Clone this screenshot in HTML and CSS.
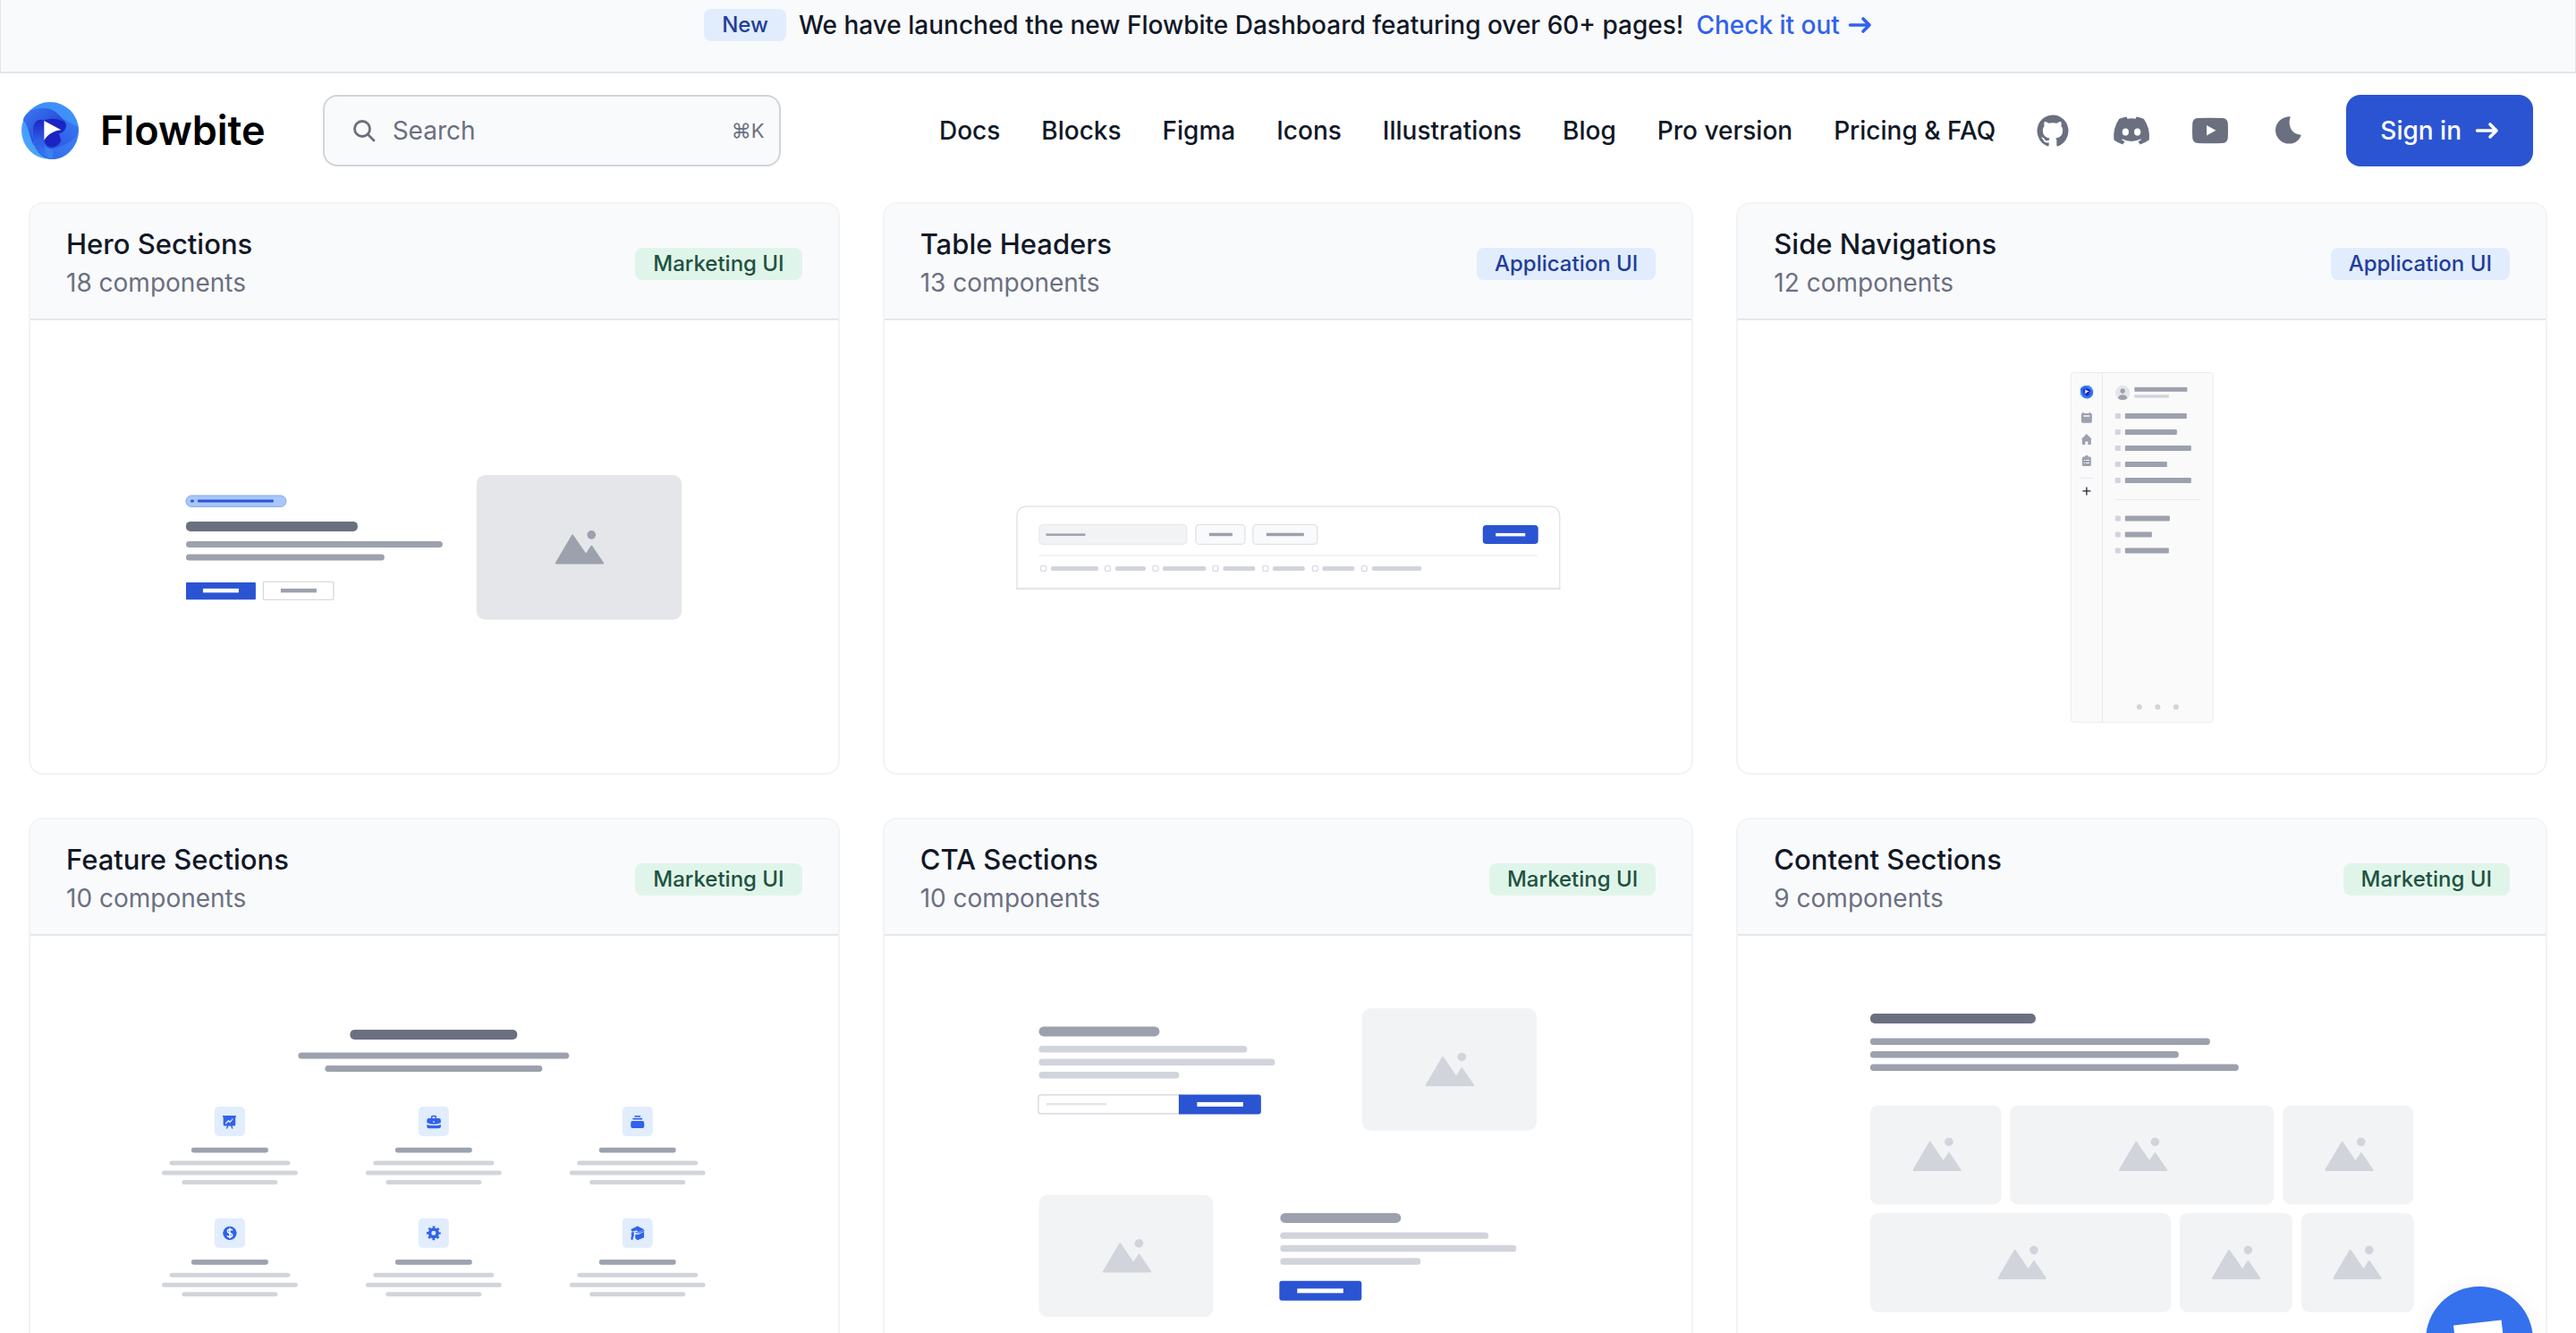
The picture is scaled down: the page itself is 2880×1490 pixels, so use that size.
FILE: index.html
```html
<!DOCTYPE html>
<html lang="en">
<head>
<meta charset="utf-8">
<meta name="viewport" content="width=device-width, initial-scale=1">
<title>Flowbite Blocks</title>
<link rel="stylesheet" href="styles.css">
</head>
<body>
<svg class="defs" aria-hidden="true">
  <defs>
    <linearGradient id="logo-base" x1="0" y1="1" x2="1" y2="0"><stop offset="0" stop-color="#4fb0ff"/><stop offset=".5" stop-color="#3f8ef8"/><stop offset="1" stop-color="#3f93f9"/></linearGradient>
    <linearGradient id="logo-mid" x1="0" y1="0" x2="1" y2="1"><stop offset="0" stop-color="#3a7bf2"/><stop offset=".5" stop-color="#2b55df"/><stop offset="1" stop-color="#1a22c0"/></linearGradient>
    <linearGradient id="logo-right" x1="1" y1="0" x2="0" y2="1"><stop offset="0" stop-color="#3a7df2"/><stop offset=".6" stop-color="#2c58e2"/><stop offset="1" stop-color="#1b25c2"/></linearGradient>
    <linearGradient id="logo-left" x1="0" y1="1" x2="0" y2="0"><stop offset="0" stop-color="#377cf3"/><stop offset=".5" stop-color="#2c5be4"/><stop offset="1" stop-color="#1b22c0"/></linearGradient>
    <symbol id="logo" viewBox="0 0 192 192">
      <circle cx="96" cy="96" r="96" fill="url(#logo-base)"/>
      <path d="M191 84C192 150 150 192 104 192C60 188 39 150 39 116L120 104C150 92 154 74 142 54C160 72 180 76 191 84Z" fill="url(#logo-right)"/>
      <path d="M104 192C58 184 39 150 39 116V86C39 60 60 52 80 58L76 62V128C76 152 96 158 106 157L104 192Z" fill="url(#logo-left)"/>
      <path d="M104 192C150 194 190 150 191 100C180 136 130 150 104 157C92 158 84 152 78 144C76 170 90 188 104 192Z" fill="#3f8ff9" opacity=".5"/>
      <path d="M5 62C14 18 88 8 118 36L144 62C160 82 144 102 122 106L76 62C62 54 42 64 39 86C38 110 38 128 42 146C26 120 22 70 5 62Z" fill="url(#logo-mid)"/>
      <path d="M76 62C96 52 124 56 144 66C154 84 146 100 126 106L133 130C120 158 84 160 76 128Z" fill="#1b24c2"/>
      <path d="M76 63L133 94C110 96 88 108 76 129Z" fill="#fff"/>
    </symbol>
    <symbol id="peaks" viewBox="0 0 55 38">
      <circle cx="40.5" cy="5" r="4.8"/>
      <path d="M1 37.7Q-.4 37.3 .4 35.6L18.4 5Q19.3 3.8 20.2 5L34.3 25.7L39.9 17Q40.6 16 41.3 17L54.2 36Q54.9 37.6 53.4 37.7Z"/>
    </symbol>
    <symbol id="arrow" viewBox="0 0 28 28"><path d="M3.500 14H25M18 7L25 14L18 21" fill="none" stroke="currentColor" stroke-width="3.600" stroke-linecap="round" stroke-linejoin="round"/></symbol>
    <symbol id="feature-text" viewBox="0 0 152 42">
      <rect x="33" y="0" width="86" height="6" rx="3" fill="#9ca3af"/>
      <g fill="#d1d5db"><rect x="8.500" y="15" width="135" height="5" rx="2.500"/><rect y="26" width="152" height="5" rx="2.500"/><rect x="22.500" y="36.500" width="107" height="5" rx="2.500"/></g>
    </symbol>
  </defs>
</svg>

<aside class="banner">
  <span class="badge badge-blue">New</span>
  <span class="banner-text">We have launched the new Flowbite Dashboard featuring over 60+ pages!</span>
  <a class="banner-link" href="#dashboard">Check it out <svg class="arrow"><use href="#arrow"/></svg></a>
</aside>

<header class="header">
  <a class="brand" href="#home"><svg class="brand-logo"><use href="#logo"/></svg><span>Flowbite</span></a>
  <label class="search">
    <svg class="search-icon" viewBox="0 0 28 28" fill="none" stroke="currentColor" stroke-width="2.800" stroke-linecap="round"><circle cx="12" cy="12" r="8.500"/><path d="M18.500 18.500L25 25"/></svg>
    <input class="search-input" type="text" placeholder="Search" aria-label="Search">
    <kbd class="search-key">⌘K</kbd>
  </label>
  <div class="header-end">
    <nav class="nav">
      <a href="#docs">Docs</a><a href="#blocks">Blocks</a><a href="#figma">Figma</a><a href="#icons">Icons</a><a href="#illustrations">Illustrations</a><a href="#blog">Blog</a><a href="#pro">Pro version</a><a href="#pricing">Pricing &amp; FAQ</a>
    </nav>
    <div class="social">
      <a href="#github" aria-label="GitHub"><svg class="icon-small" viewBox="0 0 24 24"><path fill-rule="evenodd" d="M12.006 2a9.847 9.847 0 0 0-6.484 2.440 10.320 10.320 0 0 0-3.393 6.170 10.480 10.480 0 0 0 1.317 6.955 10.045 10.045 0 0 0 5.400 4.418c.504.095.683-.223.683-.494 0-.245-.010-1.052-.014-1.908-2.780.620-3.366-1.210-3.366-1.210a2.711 2.711 0 0 0-1.110-1.500c-.907-.637.070-.621.070-.621.317.044.620.163.885.346.266.183.487.426.647.710.135.253.318.476.538.655a2.079 2.079 0 0 0 2.370.196c.045-.520.270-1.006.635-1.370-2.219-.259-4.554-1.138-4.554-5.070a4.022 4.022 0 0 1 1.031-2.750 3.770 3.770 0 0 1 .096-2.713s.839-.275 2.749 1.050a9.260 9.260 0 0 1 5.004 0c1.906-1.325 2.740-1.050 2.740-1.050.370.858.406 1.828.101 2.713a4.017 4.017 0 0 1 1.029 2.750c0 3.939-2.339 4.805-4.564 5.058a2.471 2.471 0 0 1 .679 1.897c0 1.372-.012 2.477-.012 2.814 0 .272.180.592.687.492a10.050 10.050 0 0 0 5.388-4.421 10.473 10.473 0 0 0 1.313-6.948 10.320 10.320 0 0 0-3.390-6.165A9.847 9.847 0 0 0 12.007 2Z"/></svg></a>
      <a href="#discord" aria-label="Discord"><svg class="icon" viewBox="0 0 24 24"><path d="M18.942 5.556a16.300 16.300 0 0 0-4.126-1.300 12.040 12.040 0 0 0-.529 1.100 15.175 15.175 0 0 0-4.573 0 11.586 11.586 0 0 0-.535-1.100 16.274 16.274 0 0 0-4.129 1.300 17.392 17.392 0 0 0-2.868 11.662 15.785 15.785 0 0 0 4.963 2.521c.410-.564.773-1.160 1.084-1.785a10.638 10.638 0 0 1-1.706-.830c.143-.106.283-.217.418-.331a11.664 11.664 0 0 0 10.118 0c.137.114.277.225.418.331-.544.328-1.116.606-1.710.832a12.580 12.580 0 0 0 1.084 1.785 16.460 16.460 0 0 0 5.064-2.595 17.286 17.286 0 0 0-2.973-11.590ZM8.678 14.813a1.940 1.940 0 0 1-1.800-2.045 1.930 1.930 0 0 1 1.800-2.047 1.918 1.918 0 0 1 1.800 2.047 1.929 1.929 0 0 1-1.800 2.045Zm6.644 0a1.940 1.940 0 0 1-1.800-2.045 1.930 1.930 0 0 1 1.800-2.047 1.919 1.919 0 0 1 1.800 2.047 1.930 1.930 0 0 1-1.800 2.045Z"/></svg></a>
      <a href="#youtube" aria-label="YouTube"><svg class="icon" viewBox="0 0 24 24"><path fill-rule="evenodd" d="M5 5Q12 4.800 19 5Q21.700 5.200 21.900 8Q22.100 12 21.900 16Q21.700 18.800 19 19Q12 19.200 5 19Q2.300 18.800 2.100 16Q1.900 12 2.100 8Q2.300 5.200 5 5ZM10 9V14.700L15.200 11.900Z"/></svg></a>
      <button type="button" aria-label="Toggle dark mode"><svg class="icon" viewBox="-9 -8 48 48"><path d="M15.500 .3Q17 0 16.600 1.200C13.500 9.500 18 20 27.500 20.400Q29 20.600 28.400 21.900C26 27.500 21 30.600 15.300 30.600C7 30.600 0 24 0 15.400C0 7.500 6.500 .8 15.500 .3Z"/></svg></button>
    </div>
    <button class="sign-in" type="button">Sign in <svg class="arrow"><use href="#arrow"/></svg></button>
  </div>
</header>

<main class="cards">
  <article class="card">
    <header class="card-head"><div><h2>Hero Sections</h2><p>18 components</p></div><span class="badge badge-green">Marketing UI</span></header>
    <svg class="preview" viewBox="0 0 903 506">
      <rect x="174" y="196" width="112" height="12.500" rx="6" fill="#a9c6fa" stroke="#84aaf8"/>
      <g fill="#2b54d3"><rect x="179" y="200.700" width="4" height="3" rx="1.500"/><rect x="187" y="200.700" width="85" height="3" rx="1"/></g>
      <rect x="174" y="225" width="192" height="11" rx="5" fill="#6b7080"/>
      <g fill="#9ca1ad"><rect x="174" y="247" width="287" height="7" rx="3.500"/><rect x="174" y="261.500" width="222" height="7" rx="3.500"/></g>
      <rect x="174" y="293" width="78" height="19.500" rx="1" fill="#2b54d3"/><rect x="193" y="300" width="40" height="4.500" fill="#fff"/>
      <rect x="260.500" y="292.500" width="78.500" height="20" rx="1" fill="#fff" stroke="#d8dae1" stroke-width="1.400"/><rect x="280" y="300" width="40" height="4.500" fill="#9ca1ad"/>
      <rect x="499" y="173" width="229.500" height="162" rx="10" fill="#e4e6ea"/>
      <use href="#peaks" x="587" y="235" width="55" height="38" fill="#9ca1ad"/>
    </svg>
  </article>

  <article class="card">
    <header class="card-head"><div><h2>Table Headers</h2><p>13 components</p></div><span class="badge badge-blue">Application UI</span></header>
    <svg class="preview" viewBox="0 0 903 506">
      <path d="M148 300V220Q148 208 160 208H743Q755 208 755 220V300Z" fill="#fff" stroke="#e5e6ea" stroke-width="1.500"/>
      <path d="M147 300H756" stroke="#e5e6ea" stroke-width="2.500"/>
      <rect x="173" y="228.500" width="165" height="22" rx="4" fill="#f2f3f5" stroke="#e5e6ea"/><rect x="180.500" y="238.500" width="44" height="2.500" fill="#9ca1ad"/>
      <g fill="#f9fafb" stroke="#dfe1e6" stroke-width="1.300"><rect x="348" y="228.500" width="55" height="22" rx="4"/><rect x="412" y="228.500" width="72" height="22" rx="4"/></g>
      <g fill="#9ca1ad"><rect x="363" y="237.800" width="26" height="3.500"/><rect x="427" y="237.800" width="42" height="3.500"/></g>
      <rect x="669" y="229" width="62" height="21" rx="4" fill="#2b54d3"/><rect x="683.500" y="238" width="33" height="3.500" fill="#fff"/>
      <path d="M172.500 263H731" stroke="#f3f4f6" stroke-width="2"/>
      <g fill="#fff" stroke="#d9dbe1" stroke-width="1.300"><rect x="174.500" y="274.500" width="6" height="6" rx="2"/><rect x="246.500" y="274.500" width="6" height="6" rx="2"/><rect x="300" y="274.500" width="6" height="6" rx="2"/><rect x="367" y="274.500" width="6" height="6" rx="2"/><rect x="423" y="274.500" width="6" height="6" rx="2"/><rect x="478.500" y="274.500" width="6" height="6" rx="2"/><rect x="533.500" y="274.500" width="6" height="6" rx="2"/></g>
      <g fill="#d1d4db"><rect x="186" y="275" width="53" height="5" rx="2"/><rect x="258" y="275" width="34" height="5" rx="2"/><rect x="311" y="275" width="48.500" height="5" rx="2"/><rect x="378.500" y="275" width="36" height="5" rx="2"/><rect x="434" y="275" width="36" height="5" rx="2"/><rect x="489.500" y="275" width="36" height="5" rx="2"/><rect x="545" y="275" width="55.500" height="5" rx="2"/></g>
    </svg>
  </article>

  <article class="card">
    <header class="card-head"><div><h2>Side Navigations</h2><p>12 components</p></div><span class="badge badge-blue">Application UI</span></header>
    <svg class="preview" viewBox="0 0 903 506">
      <rect x="372.500" y="58.500" width="159" height="391" rx="3" fill="#fafafa" stroke="#ebecef"/>
      <path d="M407.500 58V450M382.500 176.500H397.500M422 200.500H517" stroke="#e7e8eb"/>
      <use href="#logo" x="382.500" y="72.500" width="15" height="15"/>
      <g fill="#9ca1ad">
        <path fill-rule="evenodd" d="M384 105.500Q384 104 385.500 104V103H387V104H393V103H394.500V104Q396 104 396 105.500V113Q396 114.700 394.500 114.700H385.500Q384 114.700 384 113ZM386.500 106.300V107.800H393.500V106.300Z"/>
        <path d="M390 127L396 133H395V138Q395 139 394 139H391.500V135.500H388.500V139H386Q385 139 385 138V133H384Z"/>
        <path fill-rule="evenodd" d="M386.500 152.500H388L389 151H391L392 152.500H393.500Q395 152.500 395 154V161.500Q395 163 393.500 163H386.500Q385 163 385 161.500V154Q385 152.500 386.500 152.500ZM387 156V157H388.300V156ZM389.300 156V157H393V156ZM387 159V160H388.300V159ZM389.300 159V160H393V159Z"/>
        <rect x="443.500" y="74.800" width="59" height="5"/>
        <rect x="433" y="104" width="69" height="6" rx="1"/><rect x="433" y="122" width="58" height="6" rx="1"/><rect x="433" y="140" width="74" height="6" rx="1"/><rect x="433" y="158" width="47" height="6" rx="1"/><rect x="433" y="176" width="74" height="6" rx="1"/>
        <rect x="433" y="218.500" width="50" height="6" rx="1"/><rect x="433" y="236.500" width="30" height="6" rx="1"/><rect x="433" y="254.500" width="49" height="6" rx="1"/>
      </g>
      <path d="M390 186.500V195.500M385.500 191H394.500" stroke="#1f2937" stroke-width="1.300"/>
      <circle cx="430.300" cy="81" r="8.200" fill="#e4e6ea"/><circle cx="430.300" cy="79" r="2.700" fill="#9ca1ad"/><path d="M425 87.300Q426 83.300 430.300 83.300T435.600 87.300Q430.300 91 425 87.300Z" fill="#9ca1ad"/>
      <g fill="#d1d4db">
        <rect x="443.500" y="83.300" width="38.500" height="3.400"/>
        <rect x="422" y="104" width="6" height="6" rx="1"/><rect x="422" y="122" width="6" height="6" rx="1"/><rect x="422" y="140" width="6" height="6" rx="1"/><rect x="422" y="158" width="6" height="6" rx="1"/><rect x="422" y="176" width="6" height="6" rx="1"/><rect x="422" y="218.500" width="6" height="6" rx="1"/><rect x="422" y="236.500" width="6" height="6" rx="1"/><rect x="422" y="254.500" width="6" height="6" rx="1"/>
        <circle cx="449" cy="432.500" r="3"/><circle cx="469.500" cy="432.500" r="3"/><circle cx="490" cy="432.500" r="3"/>
      </g>
    </svg>
  </article>

  <article class="card">
    <header class="card-head"><div><h2>Feature Sections</h2><p>10 components</p></div><span class="badge badge-green">Marketing UI</span></header>
    <svg class="preview" viewBox="0 0 903 506">
      <rect x="357.500" y="105" width="187" height="11" rx="5" fill="#6b7080"/>
      <g fill="#9ca1ad"><rect x="299.500" y="130.500" width="303" height="7" rx="3.500"/><rect x="329.500" y="145" width="243" height="7" rx="3.500"/></g>
      <g fill="#e1edfd"><rect x="206" y="191" width="34" height="33" rx="5"/><rect x="434" y="191" width="34" height="33" rx="5"/><rect x="662" y="191" width="34" height="33" rx="5"/><rect x="206" y="316" width="34" height="33" rx="5"/><rect x="434" y="316" width="34" height="33" rx="5"/><rect x="662" y="316" width="34" height="33" rx="5"/></g>
      <use href="#feature-text" x="147" y="236.500" width="152" height="42"/><use href="#feature-text" x="375" y="236.500" width="152" height="42"/><use href="#feature-text" x="603" y="236.500" width="152" height="42"/>
      <use href="#feature-text" x="147" y="362" width="152" height="42"/><use href="#feature-text" x="375" y="362" width="152" height="42"/><use href="#feature-text" x="603" y="362" width="152" height="42"/>
      <g fill="#3162ec">
        <path fill-rule="evenodd" d="M215 201H230V202.500H229.300V211Q229.300 212.500 227.800 212.500H225.500L226.800 215.500H225.300L224 212.500H221.500L220.300 215.500H218.800L220 212.500H217.500Q215.700 212.500 215.700 211V202.500H215ZM217.800 209.500L218.800 210.500L221.500 207.800L223 209.300L226.500 205.500V204L223 207.300L221.500 205.800Z"/>
        <path fill-rule="evenodd" d="M448 204V202.800Q448 200.800 450 200.800H452.300Q454.300 200.800 454.300 202.800V204H457Q459 204 459 206V209Q456 210.800 451.200 210.800T443.500 209V206Q443.500 204 445.500 204ZM449.500 204H452.800V203Q452.800 202.300 452 202.300H450.300Q449.500 202.300 449.500 203ZM450.400 207.300V208.800H452V207.300Z"/><path d="M443.500 211Q451.200 213.400 459 211V213.500Q459 215.300 457 215.300H445.500Q443.500 215.300 443.500 213.500Z"/>
        <rect x="675.500" y="201" width="7" height="1.700" rx=".800"/><rect x="673.500" y="203.900" width="11" height="1.700" rx=".800"/><rect x="671.500" y="207" width="15" height="8" rx="2"/>
        <circle cx="223" cy="332.500" r="7.700"/>
        <path d="M671.500 328.500L679 324.700L686.500 328.500L680 331.300L678 329.500L673 331Z"/><path d="M672 332L675 331V336L674 337.500V340H671.700V337L672.300 336ZM676.500 334L680 334.200L686.300 331V337.500L679 340.300L676.500 338.500Z"/><path d="M684 329.800L686.500 329V330.400L680 333L676.500 331.800V330.800L680 332Z"/>
      </g>
      <g fill="none" stroke="#3162ec"><circle cx="451" cy="332.500" r="4.300" stroke-width="3.600"/><circle cx="451" cy="332.500" r="6.800" stroke-width="2.200" stroke-dasharray="2.670 2.670" stroke-dashoffset="1.335"/></g>
      <path d="M226 329.300Q225 328.300 223 328.300Q220.500 328.300 220.500 330.300Q220.500 332 223 332.500Q225.700 333 225.700 334.800Q225.700 336.700 223 336.700Q220.800 336.700 220 335.500M223 326.700V338.300" fill="none" stroke="#fff" stroke-width="1.500"/>
    </svg>
  </article>

  <article class="card">
    <header class="card-head"><div><h2>CTA Sections</h2><p>10 components</p></div><span class="badge badge-green">Marketing UI</span></header>
    <svg class="preview" viewBox="0 0 903 506">
      <g fill="#f2f3f5"><rect x="534" y="81" width="195.500" height="137" rx="10"/><rect x="172.500" y="289.500" width="195" height="137" rx="10"/></g>
      <g fill="#d1d4db">
        <use href="#peaks" x="605" y="130.500" width="55" height="38"/><use href="#peaks" x="244" y="339" width="55" height="38"/>
        <rect x="172.500" y="123" width="233" height="7.500" rx="3.500"/><rect x="172.500" y="137.500" width="264" height="7.500" rx="3.500"/><rect x="172.500" y="152" width="157" height="7.500" rx="3.500"/>
        <rect x="442.500" y="331.500" width="233" height="7.500" rx="3.500"/><rect x="442.500" y="346" width="264" height="7.500" rx="3.500"/><rect x="442.500" y="360.500" width="157" height="7.500" rx="3.500"/>
      </g>
      <g fill="#9ca1ad"><rect x="172.500" y="101.500" width="135" height="11" rx="5.500"/><rect x="442.500" y="310" width="135" height="11" rx="5.500"/></g>
      <rect x="172" y="178" width="160" height="21" rx="3" fill="#fff" stroke="#d1d4db" stroke-width="1.200"/><rect x="181" y="187" width="67" height="2.500" fill="#e4e6ea"/>
      <path d="M329 177.500H418Q421 177.500 421 180.500V196.500Q421 199.500 418 199.500H329Z" fill="#2b54d3"/><rect x="349.500" y="186" width="51.500" height="5" fill="#fff"/>
      <rect x="441.500" y="386" width="92" height="22" rx="3" fill="#2b54d3"/><rect x="461.500" y="394.500" width="51.500" height="5" fill="#fff"/>
    </svg>
  </article>

  <article class="card">
    <header class="card-head"><div><h2>Content Sections</h2><p>9 components</p></div><span class="badge badge-green">Marketing UI</span></header>
    <svg class="preview" viewBox="0 0 903 506">
      <rect x="148" y="87" width="185" height="11" rx="5" fill="#6b7080"/>
      <g fill="#9ca1ad"><rect x="148" y="114.500" width="380" height="7.500" rx="3.500"/><rect x="148" y="129" width="345" height="7.500" rx="3.500"/><rect x="148" y="143.500" width="412" height="7.500" rx="3.500"/></g>
      <g fill="#f2f3f5"><rect x="148" y="189.500" width="146.500" height="111" rx="9"/><rect x="304.500" y="189.500" width="295" height="111" rx="9"/><rect x="609.500" y="189.500" width="146" height="111" rx="9"/><rect x="148" y="310" width="336.500" height="111" rx="9"/><rect x="494" y="310" width="126" height="111" rx="9"/><rect x="630" y="310" width="126" height="111" rx="9"/></g>
      <g fill="#d1d4db"><use href="#peaks" x="195.500" y="225.500" width="55" height="38"/><use href="#peaks" x="426" y="225.500" width="55" height="38"/><use href="#peaks" x="656.500" y="225.500" width="55" height="38"/><use href="#peaks" x="290.500" y="346.500" width="55" height="38"/><use href="#peaks" x="530" y="346.500" width="55" height="38"/><use href="#peaks" x="665.500" y="346.500" width="55" height="38"/></g>
    </svg>
  </article>
</main>

<button class="chat" type="button" aria-label="Open chat"><svg viewBox="0 0 120 120"><path d="M31 43.500L84.500 37.500L90 84L66 87L58 98L50 89L36 90Z" fill="#fff"/></svg></button>
</body>
</html>
```
FILE: styles.css
```css
* {
  box-sizing: border-box;
}

html {
  scrollbar-width: none;
}

body {
  margin: 0;
  background: #fff;
  color: #111827;
  font: 500 28px/40px Inter, "Liberation Sans", sans-serif;
}

a {
  color: inherit;
  text-decoration: none;
}

button {
  border: 0;
  padding: 0;
  background: none;
  color: inherit;
  font: inherit;
}

svg {
  display: block;
}

h2,
p {
  margin: 0;
}

.defs {
  position: absolute;
  width: 0;
  height: 0;
}

.arrow {
  width: 28px;
  height: 28px;
}

.badge {
  padding: 0 20px;
  border-radius: 8px;
  font-size: 24px;
  line-height: 36px;
  white-space: nowrap;
}

.badge-blue {
  background: #e1edfd;
  color: #233c9b;
}

.badge-green {
  background: #e0f5ea;
  color: #20523f;
}

.banner {
  display: flex;
  justify-content: center;
  align-items: center;
  gap: 14px;
  padding: 8px 32px 32px;
  border: 1px solid #e4e5ea;
  border-width: 0 1px 2px;
  background: #f9fafc;
}

.banner-link {
  display: flex;
  align-items: center;
  gap: 8px;
  color: #3162ec;
}

.header {
  display: flex;
  align-items: center;
  padding: 24px 48px 24px 24px;
}

.brand {
  display: flex;
  align-items: center;
  gap: 24px;
  color: #000;
  font-size: 45px;
  font-weight: 600;
  line-height: 64px;
}

.brand-logo {
  width: 64px;
  height: 64px;
}

.search {
  display: flex;
  align-items: center;
  gap: 18px;
  width: 512px;
  height: 80px;
  margin-left: 64px;
  padding: 0 16px 0 30px;
  border: 2px solid #d1d4db;
  border-radius: 16px;
  background: #f9fafc;
  color: #6b7080;
}

.search-icon {
  flex: none;
  width: 28px;
  height: 28px;
}

.search-input {
  flex: 1;
  min-width: 0;
  padding: 0;
  border: 0;
  outline: 0;
  background: none;
  color: inherit;
  font: inherit;
  font-weight: 400;
}

.search-input::placeholder {
  color: #6b7080;
  opacity: 1;
}

.search-key {
  font: 400 22px/40px Inter, "DejaVu Sans", sans-serif;
}

.header-end {
  display: flex;
  align-items: center;
  gap: 40px;
  margin-left: auto;
}

.nav {
  display: flex;
  gap: 46px;
  white-space: nowrap;
}

.social {
  display: flex;
  gap: 40px;
  color: #6b7080;
}

.social > * {
  display: grid;
  place-items: center;
  width: 48px;
  height: 48px;
}

.icon,
.icon-small {
  width: 48px;
  height: 48px;
  fill: currentColor;
}

.icon-small {
  width: 42px;
  height: 42px;
}

.sign-in {
  display: flex;
  align-items: center;
  gap: 14px;
  height: 80px;
  padding: 0 38px;
  border-radius: 16px;
  background: #2b54d3;
  color: #fff;
  white-space: nowrap;
}

.cards {
  display: grid;
  grid-template-columns: repeat(3, minmax(0, 1fr));
  gap: 48px;
  padding: 16px 32px 48px;
}

.card {
  overflow: hidden;
  border: 2px solid #f2f3f5;
  border-radius: 16px;
}

.card-head {
  display: flex;
  justify-content: space-between;
  align-items: center;
  padding: 22px 40px 20px;
  border-bottom: 2px solid #e4e6ea;
  background: #f9fafc;
}

.card-head h2 {
  font-size: 31px;
  font-weight: 500;
  line-height: 46px;
}

.card-head p {
  color: #6b7080;
  font-weight: 400;
}

.card-head .badge {
  margin-top: 4px;
}

.preview {
  width: 100%;
  height: auto;
}

.chat {
  position: fixed;
  right: 48px;
  bottom: -68px;
  width: 120px;
  height: 120px;
  border-radius: 50%;
  background: #3570ed;
  box-shadow: 0 2px 24px rgba(0, 0, 0, 0.06);
}
```
